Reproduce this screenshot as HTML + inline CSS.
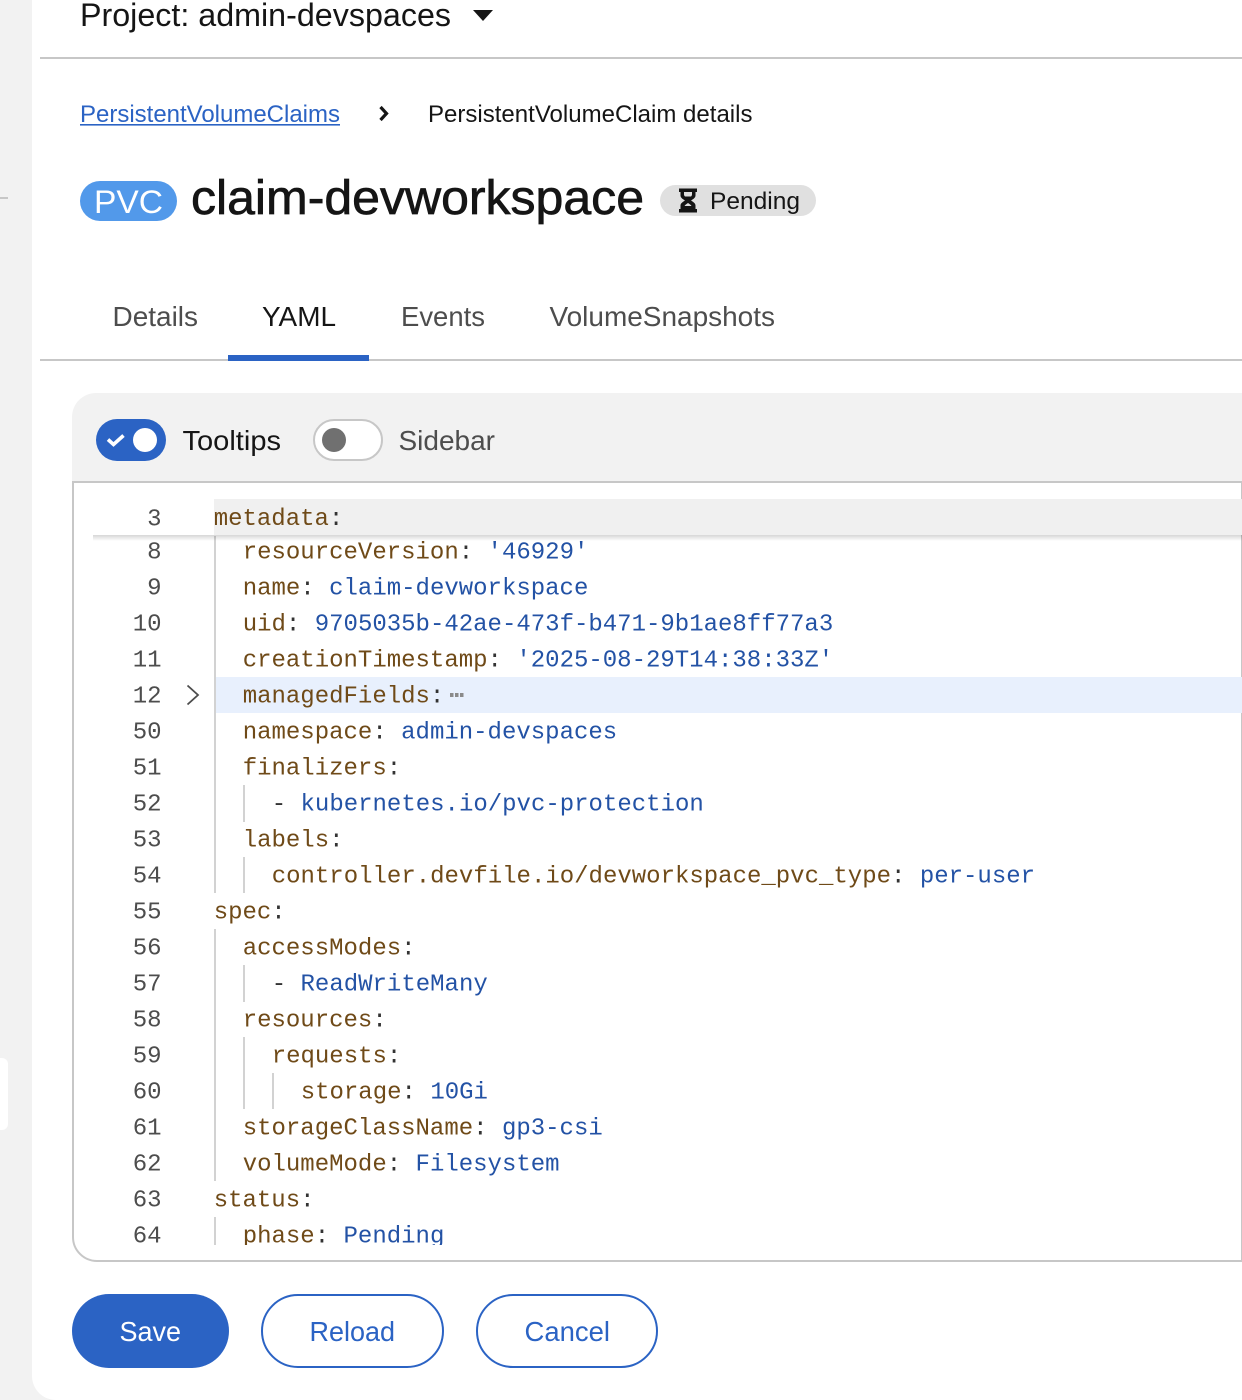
<!DOCTYPE html>
<html lang="en">
<head>
<meta charset="utf-8">
<title>PersistentVolumeClaim details</title>
<style>
html,body{margin:0;padding:0;background:#f2f2f2;width:1242px;height:1400px;overflow:hidden}
svg{display:block}
text{font-family:"Liberation Sans",sans-serif;white-space:pre}
.m text,text.m,.m tspan{font-family:"Liberation Mono",monospace;font-size:24px}
.n text{text-anchor:end;fill:#4d4d4d}
.k{fill:#6f4a18}
.v{fill:#2352a5}
.p{fill:#333}
</style>
</head>
<body>
<svg width="1242" height="1400" viewBox="0 0 1242 1400" xmlns="http://www.w3.org/2000/svg">
<defs>
<clipPath id="ed"><rect x="74" y="483" width="1168" height="762"/></clipPath>
<linearGradient id="sh" x1="0" y1="0" x2="0" y2="1"><stop offset="0" stop-color="#000" stop-opacity=".16"/><stop offset="1" stop-color="#000" stop-opacity="0"/></linearGradient>
</defs>
<!-- page backdrop -->
<rect width="1242" height="1400" fill="#f2f2f2"/>
<rect x="0" y="197" width="8" height="2" fill="#c7c7c7"/>
<path d="M0 1058h2a6 6 0 0 1 6 6v60a6 6 0 0 1-6 6h-2z" fill="#fff"/>
<path d="M32 0H1242V1400H56a24 24 0 0 1-24-24z" fill="#fff"/>
<!-- header -->
<text x="80" y="26" font-size="32" fill="#151515" textLength="371" lengthAdjust="spacingAndGlyphs">Project: admin-devspaces</text>
<path d="M473 10h20l-10 11z" fill="#151515"/>
<rect x="40" y="57" width="1202" height="2" fill="#c7c7c7"/>
<!-- breadcrumb -->
<text x="80" y="122" font-size="24" fill="#2b63c4" textLength="260" lengthAdjust="spacingAndGlyphs">PersistentVolumeClaims</text>
<rect x="80" y="124" width="260" height="1.6" fill="#2b63c4"/>
<path d="M380.500 107l6 6.500-6 6.500" fill="none" stroke="#151515" stroke-width="3.200"/>
<text x="428" y="122" font-size="24" fill="#151515" textLength="324.500" lengthAdjust="spacingAndGlyphs">PersistentVolumeClaim details</text>
<!-- title -->
<rect x="80" y="181" width="97" height="40" rx="20" fill="#5299ea"/>
<text x="94" y="213" font-size="32" fill="#fff" textLength="69" lengthAdjust="spacingAndGlyphs">PVC</text>
<text x="191" y="214" font-size="48" fill="#151515" stroke="#151515" stroke-width=".7" textLength="453" lengthAdjust="spacingAndGlyphs">claim-devworkspace</text>
<rect x="660" y="185" width="156" height="31" rx="15.500" fill="#e0e0e0"/>
<path d="M679 188.500h18v3.500h-1.500v3.500c0 2.500-3 4-4.500 5 1.500 1 4.500 2.500 4.500 5v3.500h1.500v3.500h-18v-3.500h1.500v-3.500c0-2.500 3-4 4.500-5-1.500-1-4.500-2.500-4.500-5v-3.500h-1.500z" fill="#151515"/>
<path d="M684 192h8v2.500c0 .8-.5 1.500-1 2h-6c-.5-.5-1-1.200-1-2z" fill="#e0e0e0"/>
<path d="M688 203c1.500 1 3 2 3.500 3h-7c.5-1 2-2 3.500-3z" fill="#e0e0e0"/>
<text x="710" y="209" font-size="24" fill="#151515" textLength="90" lengthAdjust="spacingAndGlyphs">Pending</text>
<!-- tabs -->
<text x="112.500" y="326" font-size="28" fill="#4d4d4d" textLength="85.500" lengthAdjust="spacingAndGlyphs">Details</text>
<text x="262" y="326" font-size="28" fill="#151515" textLength="74" lengthAdjust="spacingAndGlyphs">YAML</text>
<text x="401" y="326" font-size="28" fill="#4d4d4d" textLength="84" lengthAdjust="spacingAndGlyphs">Events</text>
<text x="549.500" y="326" font-size="28" fill="#4d4d4d" textLength="225.500" lengthAdjust="spacingAndGlyphs">VolumeSnapshots</text>
<rect x="40" y="359" width="1202" height="2" fill="#c7c7c7"/>
<rect x="228" y="355" width="141" height="6" fill="#2b63c4"/>
<!-- toolbar -->
<path d="M72 483V417a24 24 0 0 1 24-24H1242V483z" fill="#f2f2f2"/>
<rect x="96" y="419" width="70" height="42" rx="21" fill="#2b63c4"/>
<circle cx="145" cy="440" r="12" fill="#fff"/>
<path d="M108 439.500l5.500 5 10-9" fill="none" stroke="#fff" stroke-width="3.600"/>
<text x="182.500" y="450" font-size="28" fill="#151515" textLength="98.500" lengthAdjust="spacingAndGlyphs">Tooltips</text>
<rect x="314" y="420" width="68" height="40" rx="20" fill="#fff" stroke="#c7c7c7" stroke-width="2"/>
<circle cx="334" cy="440" r="12" fill="#707070"/>
<text x="398.500" y="450" font-size="28" fill="#4d4d4d" textLength="96.500" lengthAdjust="spacingAndGlyphs">Sidebar</text>
<!-- editor frame -->
<path d="M73 482H1242V1261H97a24 24 0 0 1-24-24z" fill="#fff" stroke="#c7c7c7" stroke-width="2"/>
<g clip-path="url(#ed)">
<rect x="214" y="499" width="1028" height="36" fill="#f0f0f0"/>
<rect x="216" y="677" width="1026" height="36" fill="#e8f0fd"/>
<!-- indent guides -->
<g fill="#d2d2d2">
<rect x="214" y="536" width="2" height="357"/>
<rect x="214" y="929" width="2" height="252"/>
<rect x="214" y="1217" width="2" height="30"/>
<rect x="243" y="785" width="2" height="37"/>
<rect x="243" y="857" width="2" height="36"/>
<rect x="243" y="965" width="2" height="37"/>
<rect x="243" y="1037" width="2" height="72"/>
<rect x="272" y="1073" width="2" height="36"/>
</g>
<!-- line numbers -->
<g class="m n" transform="translate(-.5,-.5)">
<text x="162" y="526">3</text>
<text x="162" y="559">8</text>
<text x="162" y="595">9</text>
<text x="162" y="631">10</text>
<text x="162" y="667">11</text>
<text x="162" y="703">12</text>
<text x="162" y="739">50</text>
<text x="162" y="775">51</text>
<text x="162" y="811">52</text>
<text x="162" y="847">53</text>
<text x="162" y="883">54</text>
<text x="162" y="919">55</text>
<text x="162" y="955">56</text>
<text x="162" y="991">57</text>
<text x="162" y="1027">58</text>
<text x="162" y="1063">59</text>
<text x="162" y="1099">60</text>
<text x="162" y="1135">61</text>
<text x="162" y="1171">62</text>
<text x="162" y="1207">63</text>
<text x="162" y="1243">64</text>
</g>
<path d="M187.500 685.500l10.500 9.500-10.500 9.500" fill="none" stroke="#4d4d4d" stroke-width="1.800"/>
<!-- code -->
<g class="m" transform="translate(-.3,-.5)">
<text x="214" y="525.500" class="k">metadata<tspan class="p">:</tspan></text>
<text x="243" y="559" class="k">resourceVersion<tspan class="p">: </tspan><tspan class="v">'46929'</tspan></text>
<text x="243" y="595" class="k">name<tspan class="p">: </tspan><tspan class="v">claim-devworkspace</tspan></text>
<text x="243" y="631" class="k">uid<tspan class="p">: </tspan><tspan class="v">9705035b-42ae-473f-b471-9b1ae8ff77a3</tspan></text>
<text x="243" y="667" class="k">creationTimestamp<tspan class="p">: </tspan><tspan class="v">'2025-08-29T14:38:33Z'</tspan></text>
<text x="243" y="703" class="k">managedFields<tspan class="p">:</tspan></text>
<text x="243" y="739" class="k">namespace<tspan class="p">: </tspan><tspan class="v">admin-devspaces</tspan></text>
<text x="243" y="775" class="k">finalizers<tspan class="p">:</tspan></text>
<text x="272" y="811" class="p">- <tspan class="v">kubernetes.io/pvc-protection</tspan></text>
<text x="243" y="847" class="k">labels<tspan class="p">:</tspan></text>
<text x="272" y="883" class="k">controller.devfile.io/devworkspace_pvc_type<tspan class="p">: </tspan><tspan class="v">per-user</tspan></text>
<text x="214" y="919" class="k">spec<tspan class="p">:</tspan></text>
<text x="243" y="955" class="k">accessModes<tspan class="p">:</tspan></text>
<text x="272" y="991" class="p">- <tspan class="v">ReadWriteMany</tspan></text>
<text x="243" y="1027" class="k">resources<tspan class="p">:</tspan></text>
<text x="272" y="1063" class="k">requests<tspan class="p">:</tspan></text>
<text x="301" y="1099" class="k">storage<tspan class="p">: </tspan><tspan class="v">10Gi</tspan></text>
<text x="243" y="1135" class="k">storageClassName<tspan class="p">: </tspan><tspan class="v">gp3-csi</tspan></text>
<text x="243" y="1171" class="k">volumeMode<tspan class="p">: </tspan><tspan class="v">Filesystem</tspan></text>
<text x="214" y="1207" class="k">status<tspan class="p">:</tspan></text>
<text x="243" y="1243" class="k">phase<tspan class="p">: </tspan><tspan class="v">Pending</tspan></text>
</g>
<g fill="#8a8a8a"><rect x="450" y="693" width="3.500" height="4"/><rect x="455" y="693" width="3.500" height="4"/><rect x="460" y="693" width="3.500" height="4"/></g>
<!-- sticky header shadow -->
<rect x="93" y="535" width="1149" height="6" fill="url(#sh)"/>
</g>
<!-- buttons -->
<rect x="72" y="1294" width="157" height="74" rx="37" fill="#2b63c4"/>
<text x="119.500" y="1341" font-size="28" fill="#fff" textLength="61.500" lengthAdjust="spacingAndGlyphs">Save</text>
<rect x="262" y="1295" width="181" height="72" rx="36" fill="#fff" stroke="#2b63c4" stroke-width="2"/>
<text x="309.500" y="1341" font-size="28" fill="#2b63c4" textLength="85.500" lengthAdjust="spacingAndGlyphs">Reload</text>
<rect x="477" y="1295" width="180" height="72" rx="36" fill="#fff" stroke="#2b63c4" stroke-width="2"/>
<text x="524.500" y="1341" font-size="28" fill="#2b63c4" textLength="85.500" lengthAdjust="spacingAndGlyphs">Cancel</text>
</svg>
</body>
</html>
